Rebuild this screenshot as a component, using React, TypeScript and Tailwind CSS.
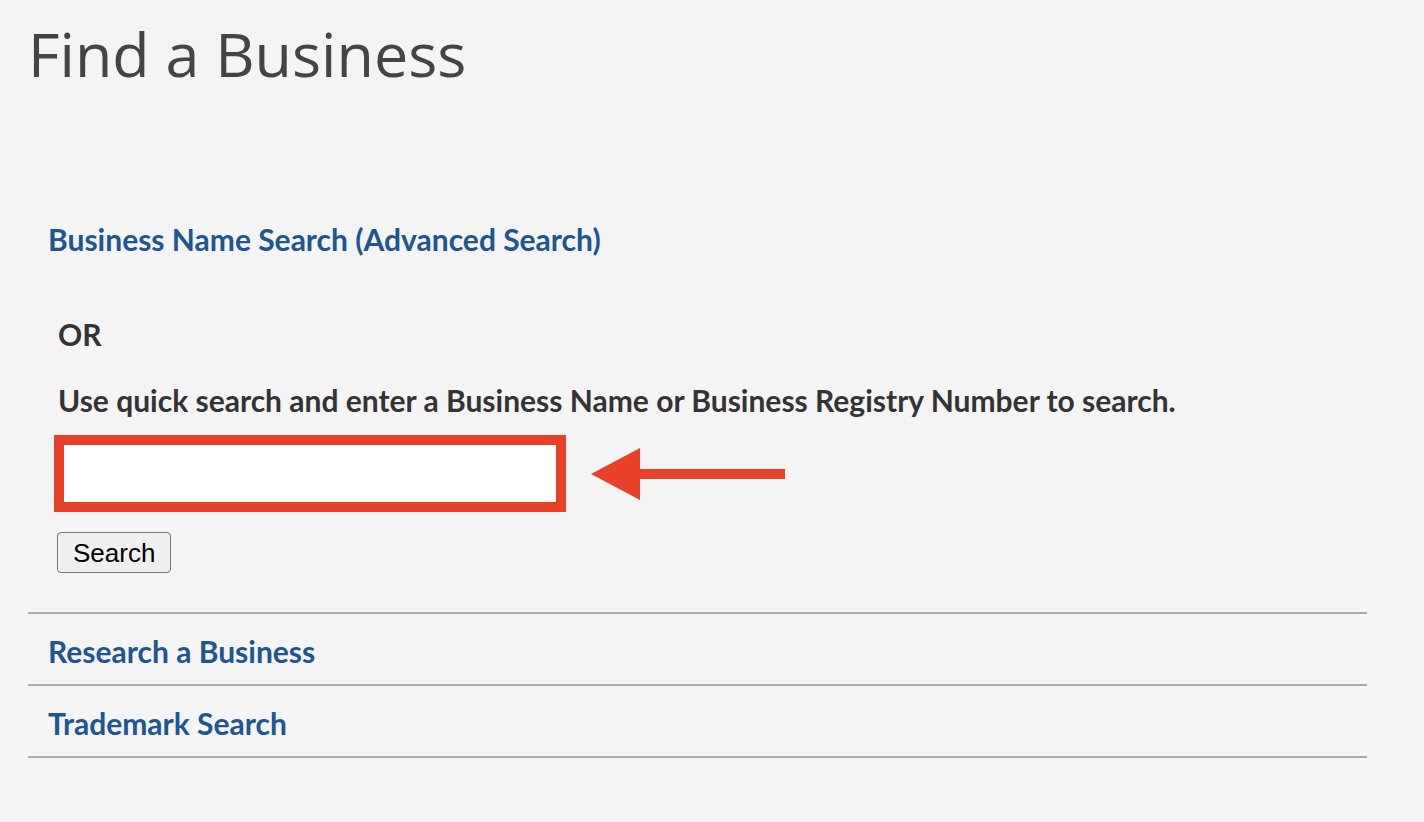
const linkClass =
  "inline-block align-top font-['Lato',sans-serif] font-bold text-[30px] leading-[34px] text-[#20558f] hover:underline";

const FindBusiness = () => {
  return (
    <div className="min-h-screen bg-[#f4f4f4] pl-[28px] pt-[23px] font-['Lato',sans-serif] text-[#333]">
      <h1 className="font-['Open_Sans',sans-serif] font-normal text-[61px] leading-[62px] text-[#444]">
        Find a Business
      </h1>

      <div className="w-[1339px] mt-[137px]">
        {/* Advanced search */}
        <div className="pl-[20px] flex">
          <a href="#" className={linkClass}>
            Business Name Search (Advanced Search)
          </a>
        </div>

        {/* Quick search */}
        <div className="pl-[30px] pt-[61px]">
          <p className="font-bold text-[30px] leading-[34px]">OR</p>
          <p className="font-bold text-[30px] leading-[34px] mt-[32px]">
            Use quick search and enter a Business Name or Business Registry Number to search.
          </p>

          <div className="flex items-center mt-[18px] -ml-[4px]">
            <input
              type="text"
              className="w-[512px] h-[77px] bg-white border-[10px] border-[#e8412a] outline-none"
            />
            <svg
              className="ml-[25px] w-[194px] h-[52px] text-[#e8412a]"
              viewBox="0 0 194 52"
              fill="currentColor"
            >
              <path d="M0 26 L49 0 L49 21 L194 21 L194 31 L49 31 L49 52 Z" />
            </svg>
          </div>

          <button className="mt-[20px] h-[41px] px-[15px] -ml-[1px] bg-[#efefef] border border-[#767676] rounded-[4px] font-['Liberation_Sans',Arial,sans-serif] text-[26px] leading-none text-black">
            Search
          </button>
        </div>

        {/* Other links */}
        <div className="mt-[39px] border-t-2 border-[#ababab]">
          <div className="pl-[20px] pt-[20px] pb-[16px] flex">
            <a href="#" className={linkClass}>
              Research a Business
            </a>
          </div>
          <div className="pl-[20px] pt-[20px] pb-[16px] flex border-t-2 border-[#ababab]">
            <a href="#" className={linkClass}>
              Trademark Search
            </a>
          </div>
          <div className="border-t-2 border-[#ababab]" />
        </div>
      </div>
    </div>
  );
};

export default function App() {
  return <FindBusiness />;
}
